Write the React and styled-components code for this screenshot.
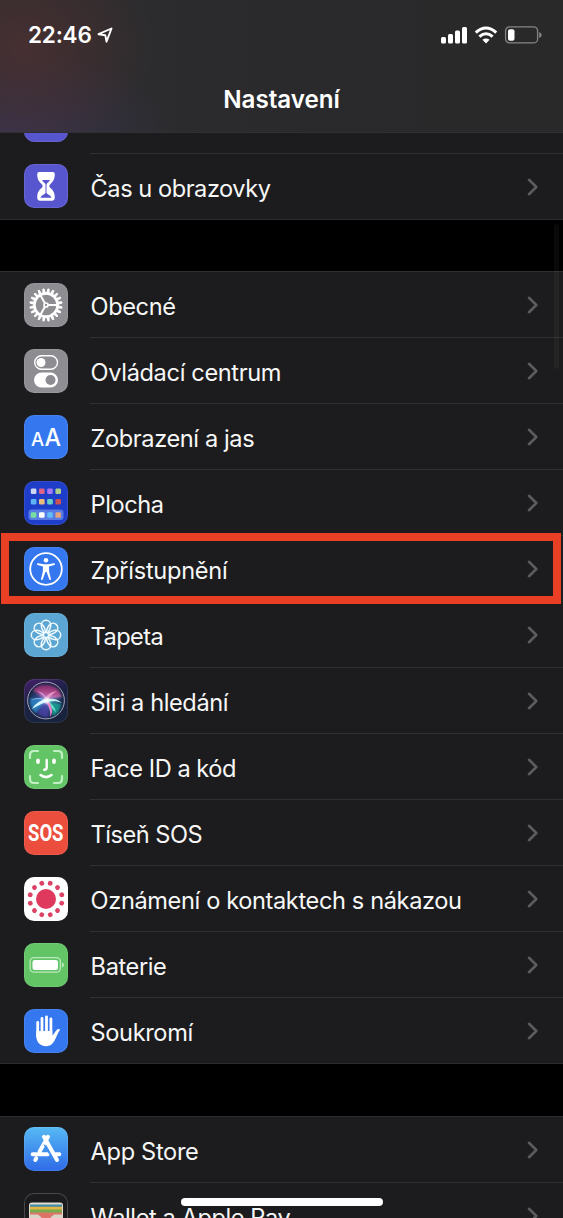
import React from 'react';
import styled, { createGlobalStyle } from 'styled-components';

const GlobalStyle = createGlobalStyle`
  html, body { margin: 0; padding: 0; background: #000; }
  body { overflow: hidden; }
  * { box-sizing: border-box; }
`;

const Screen = styled.div`
  position: relative;
  display: flex;
  flex-direction: column;
  height: 1218px;
  overflow: hidden;
  background: #000;
  color: #f7f7f7;
  font-family: Inter, "Liberation Sans", sans-serif;
`;

const Header = styled.header`
  display: flex;
  flex-direction: column;
  flex: none;
  height: 133px;
  border-bottom: 1px solid #303032;
  background:
    radial-gradient(ellipse 130px 115px at 24px 46px, rgba(86, 48, 50, 0.6), rgba(76, 46, 48, 0.45) 45%, transparent),
    radial-gradient(ellipse 170px 85px at 6px 132px, rgba(60, 54, 90, 0.72), transparent),
    linear-gradient(90deg, #2e2e30 0, #2a2a2c 50%, #29292a 100%);
`;

const StatusBar = styled.div`
  display: flex;
  align-items: center;
  justify-content: space-between;
  height: 68px;
  padding: 0 21px 0 28px;
`;

const Clock = styled.div`
  display: flex;
  align-items: center;
  gap: 5px;
  padding-top: 2px;
  font-size: 22.5px;
  font-weight: 600;
  letter-spacing: -0.2px;
  line-height: 28px;
  color: #fff;
`;

const Indicators = styled.div`
  display: flex;
  align-items: center;
  gap: 6px;
  padding-top: 1px;
`;

const Title = styled.h1`
  margin: 17px 0 0;
  font-size: 24.2px;
  font-weight: 600;
  line-height: 30px;
  letter-spacing: -0.05px;
  text-align: center;
  color: #fff;
`;

const Group = styled.section`
  flex: none;
  padding-top: ${(p) => (p.$continued ? 0 : 1)}px;
  margin-bottom: ${(p) => (p.$continued ? 51 : 52)}px;
  background: linear-gradient(#2e2e30, #2e2e30) top / 100% ${(p) => (p.$continued ? 0 : 1)}px no-repeat, #1c1c1e;
  border-bottom: 1px solid #2b2b2d;
`;

const Row = styled.div`
  display: flex;
  align-items: center;
  height: ${(p) => (p.$last ? 65 : 66)}px;
  padding: 0 0 0 24px;
`;

const ClippedRow = styled.div`
  display: flex;
  align-items: flex-end;
  height: 21px;
  padding-left: 24px;
  overflow: hidden;
  background: linear-gradient(#303032, #303032) 90px 100% / 473px 1px no-repeat;
`;

const ClippedIcon = styled.div`
  width: 44px;
  height: 44px;
  margin-bottom: 12px;
  border: 1px solid #6663cd;
  border-radius: 10px;
  background: #5856ce;
`;

const Tile = styled.div`
  flex: none;
  width: 44px;
  height: 44px;
  margin-top: ${(p) => (p.$last && !p.$raised ? 1 : 0)}px;
  margin-bottom: ${(p) => (p.$raised ? (p.$last ? 1 : 2) : 0)}px;
  overflow: hidden;
  border-radius: 10px;
  background: ${(p) => p.$bg};
  box-shadow: inset 0 0 0 1px ${(p) => p.$edge || 'rgba(255,255,255,.09)'};
  svg { display: block; }
`;

const Body = styled.div`
  display: flex;
  flex: 1;
  align-items: center;
  justify-content: space-between;
  align-self: stretch;
  margin-left: 22px;
  padding-right: 24px;
  border-bottom: ${(p) => (p.$last ? 0 : 1)}px solid #303032;
`;

const Label = styled.span`
  padding: ${(p) => (p.$last ? 4 : 5)}px 0 0 0.6px;
  font-size: 23.6px;
  line-height: 30px;
  letter-spacing: ${(p) => p.$track}px;
  white-space: nowrap;
`;

const Highlight = styled.div`
  position: absolute;
  left: 1px;
  top: 533px;
  width: 560px;
  height: 71px;
  border: 8px solid #e93f24;
`;

const ScrollThumb = styled.div`
  position: absolute;
  left: 554px;
  top: 224px;
  width: 5px;
  height: 145px;
  border-radius: 3px;
  background: rgba(255, 255, 255, 0.035);
`;

const HomeBar = styled.div`
  position: absolute;
  left: 181px;
  top: 1198px;
  width: 202px;
  height: 8px;
  border-radius: 4px;
  background: #fff;
`;

const Art = ({ children }) => (
  <svg width="44" height="44" viewBox="0 0 44 44" fill="none">{children}</svg>
);

const Chevron = () => (
  <svg width="12" height="18" viewBox="0 0 12 18" fill="none" stroke="#5c5c60" strokeWidth="2.6" strokeLinecap="round" strokeLinejoin="round">
    <path d="M2 1.8 9.3 9 2 16.2" />
  </svg>
);

const spin = (n, offset = 0) => Array.from({ length: n }, (_, i) => offset + (360 / n) * i);

const Hourglass = () => (
  <Art>
    <path fill="#fff" d="M15.5 8h13a2.2 2.2 0 0 1 2.3 2.3c0 5.3-2.2 7.7-4.8 10.2-.9.9-.9 2.1 0 3 2.6 2.5 4.8 4.6 4.8 10 0 2-1 3.2-2.9 3.2h-11.800c-1.900 0-2.900-1.200-2.900-3.200 0-5.400 2.200-7.500 4.800-10 .9-.9.9-2.1 0-3-2.600-2.500-4.800-4.900-4.800-10.200A2.200 2.200 0 0 1 15.500 8Z" />
    <path stroke="#5856ce" strokeWidth="1" d="M22 19v11" />
    <path fill="#5856ce" d="M18 16h8c-.8 1.8-2.6 2.8-4 4.6-1.400-1.800-3.200-2.800-4-4.600ZM16.500 33.800c1-3 3.500-3 5.500-5 2 2 4.500 2 5.500 5Z" />
  </Art>
);

const Gear = () => (
  <Art>
    {spin(20, 9).map((a) => (
      <path key={a} d="M20.900 9.500 21.400 5.800h1.200l.5 3.700Z" fill="#fff" stroke="#fff" strokeWidth=".9" transform={`rotate(${a} 22 22)`} />
    ))}
    <circle cx="22" cy="22" r="11.600" stroke="#fff" strokeWidth="2.600" />
    {[0, 120, 240].map((a) => <path key={a} d="M23.500 22h10" stroke="#fff" strokeWidth="2" transform={`rotate(${a} 22 22)`} />)}
    <circle cx="22" cy="22" r="2" fill="#8d8d92" stroke="#fff" strokeWidth="1.700" />
  </Art>
);

const Toggles = () => (
  <Art>
    <rect x="10.700" y="6.700" width="22.800" height="13.600" rx="6.800" stroke="#fff" strokeWidth="1.400" />
    <circle cx="17" cy="13.500" r="4.500" fill="#fff" />
    <rect x="10" y="23.500" width="24" height="15" rx="7.500" fill="#fff" />
    <circle cx="26.500" cy="31" r="5" fill="#8c8c91" />
  </Art>
);

const Letters = () => (
  <Art>
    <text x="7" y="30.700" fill="#fff" fontFamily="Inter" fontSize="18.500" fontWeight="500">A</text>
    <text x="20.500" y="30.700" fill="#fff" fontFamily="Inter" fontSize="24.500" fontWeight="500" textLength="16.500" lengthAdjust="spacingAndGlyphs">A</text>
  </Art>
);

const appColors = [
  ['#cdd4f4', '#dc6287', '#a779f5', '#adcf89'],
  ['#5eb3f7', '#eabb78', '#69cfc7', '#cc5152'],
  ['#76dfa1', '#ffffff', '#64bef5', '#e3a37e'],
];
const HomeGrid = () => (
  <Art>
    <rect x="4.500" y="28.500" width="35" height="10.400" rx="3" fill="#587ae5" />
    {appColors.map((line, r) => line.map((c, i) => (
      <rect key={`${r}${i}`} x={6.800 + i * 8.200} y={[7.500, 18, 31.200][r]} width="5.600" height="5.600" rx="1.300" fill={c} />
    )))}
  </Art>
);

const Person = () => (
  <Art>
    <circle cx="22" cy="22" r="15.800" stroke="#fff" strokeWidth="1.800" />
    <circle cx="22" cy="13.300" r="2.300" fill="#fff" />
    <path fill="#fff" d="m14 16.300 6 1h4l6-1c1.200-.2 1.400 1.300.3 1.600l-5.300 1.600.2 5.200 1.700 7c.3 1.200-1.300 1.700-1.700.6L22.600 25h-1.200l-2.600 7.300c-.4 1.100-2 .6-1.700-.6l1.700-7 .2-5.200-5.300-1.600c-1.100-.3-.9-1.800.3-1.600Z" />
  </Art>
);

const Flower = () => (
  <Art>
    {spin(8).map((a) => (
      <path key={a} d="M22 21.500C18 17.500 17.200 14.500 17.300 12a4.700 4.700 0 0 1 9.400 0c.1 2.500-.7 5.500-4.700 9.500Z" stroke="#f1fbff" strokeWidth="1.500" transform={`rotate(${a} 22 22)`} />
    ))}
    <circle cx="22" cy="22" r="2.500" fill="#5ba6d2" stroke="#f1fbff" strokeWidth="1.300" />
  </Art>
);

const Siri = () => (
  <Art>
    <defs>
      <radialGradient id="orb"><stop offset="0" stopColor="#7f8ae0" /><stop offset=".5" stopColor="#354a8a" /><stop offset="1" stopColor="#172541" /></radialGradient>
      <linearGradient id="pink" x2="0" y2="1"><stop stopColor="#8c2a72" /><stop offset=".6" stopColor="#d0508f" /><stop offset="1" stopColor="#c9a0e0" /></linearGradient>
      <filter id="glow" x="-30%" y="-30%" width="160%" height="160%"><feGaussianBlur stdDeviation="1.100" /></filter>
      <filter id="soft"><feGaussianBlur stdDeviation=".35" /></filter>
    </defs>
    <circle cx="22" cy="22" r="18" fill="url(#orb)" />
    <path d="M9 11Q20 1 34 10L38 18 22 21Z" fill="url(#pink)" opacity=".85" filter="url(#glow)" />
    <path d="m22 21-16-2q-1 11 6 15Z" fill="#2c8fd0" opacity=".75" filter="url(#glow)" />
    <path d="m23 22 14 3q-1 9-8 12Z" fill="#13a995" opacity=".8" filter="url(#glow)" />
    <path d="m22 23-9 11q6 5 12 4Z" fill="#4a3fa6" opacity=".8" filter="url(#glow)" />
    <g filter="url(#soft)">
      <path d="M13 12c6 1 9 4 10 9-3-4-6-6-10-9Z" fill="#c79be6" opacity=".8" />
      <path d="M22 21c0-6 5-8 11-9-4 3-7 5-9 9Z" fill="#efa2cf" opacity=".8" />
      <path d="M24 20c5-1 10 0 14 4-5-2-9-2-15-1Z" fill="#bff5ea" />
      <path d="M24 22c4 3 7 6 8 11-4-3-6-6-9-10Z" fill="#6fe0cb" opacity=".9" />
      <path d="M22 23c-5 2-9 4-14 7 3-5 7-8 13-10Z" fill="#d5f6ff" />
      <path d="M21 21c-4-1-9-1-14 0 5-3 10-2 14-1Z" fill="#8fbdf5" opacity=".8" />
      <path d="M22 23c3 5 5 9 4 15 4-6 1-11-1-15Z" fill="#f37fcb" />
    </g>
    <circle cx="22.500" cy="21.500" r="3" fill="#fff" filter="url(#glow)" />
    <circle cx="22" cy="21.500" r="18.400" stroke="#a7a6bd" strokeWidth="1" />
  </Art>
);

const Face = () => (
  <Art>
    <g stroke="#c3efc5" strokeWidth="2.200" strokeLinecap="round">
      <path d="M6 13V10q0-4 4-4h4M30 6h4q4 0 4 4v3M38 31v3q0 4-4 4h-4M14 38h-4q-4 0-4-4v-3" />
    </g>
    <g stroke="#fff" strokeLinecap="round">
      <path strokeWidth="3.600" d="M14 15.300v2M30 15.300v2" />
      <path strokeWidth="2.400" d="M22.700 15v7.500q0 2.200-2.500 2.200" />
      <path strokeWidth="2.500" d="M16.500 30q5.500 4.200 11 0" />
    </g>
  </Art>
);

const Sos = () => (
  <Art>
    <text x="4" y="30" fill="#fff" fontFamily="Roboto, sans-serif" fontSize="23.500" fontWeight="700" textLength="35.500" lengthAdjust="spacingAndGlyphs">SOS</text>
  </Art>
);

const Exposure = () => (
  <Art>
    <circle cx="22" cy="22" r="10" fill="#df3a5d" />
    {spin(12, 15).map((a) => <circle key={a} cx="22" cy="5.700" r="2.400" fill="#dc4265" transform={`rotate(${a} 22 22)`} />)}
  </Art>
);

const BatteryArt = () => (
  <Art>
    <rect x="6.100" y="14.600" width="30.300" height="14.600" rx="4" stroke="#bde9bf" strokeWidth="1.300" />
    <rect x="8.500" y="17" width="25.500" height="10" rx="2.200" fill="#fff" />
    <path d="M38 19.500q2 .8 2 2.500t-2 2.500Z" fill="#bde9bf" />
  </Art>
);

const Hand = () => (
  <Art>
    <g stroke="#fff" strokeLinecap="round" strokeWidth="2.800">
      <path d="M13.700 13.500v14M18 9.500V25M22.500 7.800V25M26.900 10v16" />
    </g>
    <path fill="#fff" d="M12.300 22h16v4.500c2-1.500 2.800-4 4.400-5.600 1.100-1.200 2.700-1 3.400-.1-1.700 2.200-2.800 5.200-4.300 8.200-2.200 5-4.800 8.200-9.600 8.200-6.400 0-9.900-4.400-9.900-10.400Z" />
  </Art>
);

const StoreArt = () => (
  <Art>
    <g stroke="#fff" strokeWidth="4" strokeLinecap="round">
      <path d="M24 9.800 15.600 24.500M20 9.800 33 33M8.700 27.200h15M30 27.200h5.300" />
      <path d="m12.300 31.200-1 1.800" />
    </g>
    <path d="m22.300 16.500 8.200 14" stroke="#4290ef" strokeWidth="1" transform="translate(-2.400 1)" />
  </Art>
);

const WalletArt = () => (
  <Art>
    <rect x="5" y="9.500" width="34" height="30" rx="3" fill="#e1ddd1" />
    <path d="M6 11.500h32v4H6Z" fill="#438baa" />
    <path d="M6 13.800h32v5H6Z" fill="#e2b642" />
    <path d="M6 16.500h32v5H6Z" fill="#79aa4d" />
    <path d="M6 19.500h32v9H6Z" fill="#dc7567" />
    <path d="M5 21.500h8c3 0 4 5 9 5s6-5 9-5h8v17H5Z" fill="#dad4c8" />
  </Art>
);

const GREY = 'linear-gradient(#8c8c91, #8e8e93)';
const BLUE = '#3577ef';
const GREEN = '#63c466';

const general = [
  { label: 'Obecné', track: -0.42, bg: GREY, icon: <Gear /> },
  { label: 'Ovládací centrum', track: -0.36, bg: GREY, icon: <Toggles /> },
  { label: 'Zobrazení a jas', track: -0.4, bg: BLUE, icon: <Letters /> },
  { label: 'Plocha', track: -0.45, bg: '#1e3dc8', icon: <HomeGrid /> },
  { label: 'Zpřístupnění', track: -0.28, bg: BLUE, icon: <Person /> },
  { label: 'Tapeta', track: -0.6, bg: '#5ba6d2', icon: <Flower /> },
  { label: 'Siri a hledání', track: -0.4, bg: 'linear-gradient(160deg, #46206a, #1c2145 40%, #162339)', icon: <Siri /> },
  { label: 'Face ID a kód', track: -0.46, bg: GREEN, icon: <Face /> },
  { label: 'Tíseň SOS', track: -0.5, bg: '#eb4e3d', icon: <Sos /> },
  { label: 'Oznámení o kontaktech s nákazou', track: -0.38, bg: '#fff', icon: <Exposure /> },
  { label: 'Baterie', track: -0.4, bg: GREEN, icon: <BatteryArt /> },
  { label: 'Soukromí', track: -0.38, bg: BLUE, icon: <Hand /> },
];

const SettingRow = ({ item, last, raised }) => (
  <Row $last={last}>
    <Tile $bg={item.bg} $edge={item.edge} $last={last} $raised={raised}>{item.icon}</Tile>
    <Body $last={last}>
      <Label $track={item.track} $last={last}>{item.label}</Label>
      <Chevron />
    </Body>
  </Row>
);

export default function App() {
  return (
    <Screen>
      <GlobalStyle />
      <Header>
        <StatusBar>
          <Clock>
            22:46
            <svg width="17" height="17" viewBox="0 0 17 17" fill="none" stroke="#fff" strokeWidth="1.900" strokeLinejoin="round">
              <path d="M14.500 1.500 1.500 7.200 8.300 8.200 9.500 14.700Z" />
            </svg>
          </Clock>
          <Indicators>
            <svg width="28" height="18" viewBox="0 0 28 18" fill="#fff">
              <rect x="1" y="11" width="5" height="6.500" rx="1.500" />
              <rect x="8" y="8" width="5" height="9.500" rx="1.500" />
              <rect x="15" y="4.500" width="5" height="13" rx="1.500" />
              <rect x="22" y="1" width="5" height="16.500" rx="1.500" />
            </svg>
            <svg width="24" height="18" viewBox="0 0 24 18" fill="none" stroke="#fff" strokeWidth="3.100">
              <path d="M1.800 6.600Q12-2.600 22.200 6.600M5.400 10.700Q12 4.800 18.600 10.700" />
              <path d="m12 17.500-3.600-3.700q3.600-2.700 7.200 0Z" fill="#fff" stroke="none" />
            </svg>
            <svg width="38" height="18" viewBox="0 0 38 18" fill="none">
              <rect x="1.600" y=".9" width="32" height="16" rx="4" stroke="#858587" strokeWidth="1.300" />
              <rect x="4" y="3.200" width="6.500" height="11.500" rx="2" fill="#fff" />
              <path d="M35.200 6q2.500 1 2.500 3t-2.500 3Z" fill="#858587" />
            </svg>
          </Indicators>
        </StatusBar>
        <Title>Nastavení</Title>
      </Header>
      <Group $continued>
        <ClippedRow><ClippedIcon /></ClippedRow>
        <SettingRow item={{ label: 'Čas u obrazovky', track: -0.46, bg: '#5856ce', icon: <Hourglass /> }} last raised />
      </Group>
      <Group>
        {general.map((item, i) => <SettingRow key={item.label} item={item} last={i === general.length - 1} />)}
      </Group>
      <Group>
        <SettingRow item={{ label: 'App Store', track: -0.32, bg: 'linear-gradient(#56b9f4, #2f6be8)', icon: <StoreArt /> }} raised />
        <SettingRow item={{ label: 'Wallet a Apple Pay', track: -0.42, bg: '#1b1b1d', edge: '#48484a', icon: <WalletArt /> }} raised />
      </Group>
      <ScrollThumb />
      <Highlight />
      <HomeBar />
    </Screen>
  );
}
